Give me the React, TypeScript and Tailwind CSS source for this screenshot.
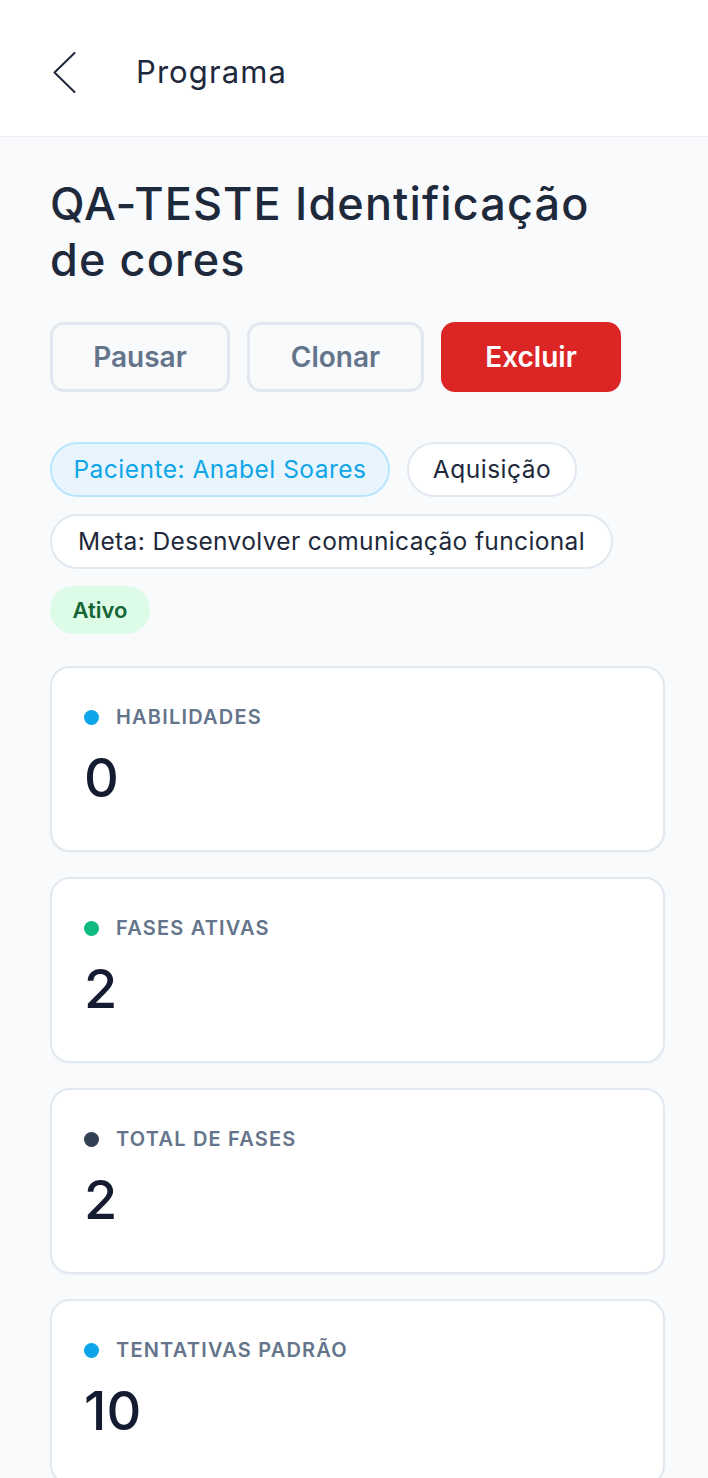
import React from "react";

const F = { fontFamily: "Inter, 'Noto Sans', sans-serif" };

function Card({ dot, label, value }: { dot: string; label: string; value: string }) {
  return (
    <div className="h-[186px] rounded-[20px] border-2 border-[#e2e8f0] bg-white pl-[32px] pt-[35px] shadow-[0_1px_2px_rgba(15,23,42,0.04)]">
      <div className="flex h-[28px] items-center gap-[17px]">
        <span className={`h-[15px] w-[15px] rounded-full ${dot}`} />
        <span className="text-[20px] font-semibold uppercase leading-[28px] tracking-[0.06em] text-[#64748b]">{label}</span>
      </div>
      <div className="mt-[17px] text-[54px] font-medium leading-[60px] text-[#151b30]">{value}</div>
    </div>
  );
}

export default function App() {
  return (
    <div style={F} className="min-h-[1478px] w-[708px] bg-[#f8fafc]">
      <header className="flex h-[137px] items-center border-b border-[#eef0f4] bg-white pl-[53px] pt-[8px]">
        <svg width="23" height="41" viewBox="0 0 23 41" fill="none" className="shrink-0">
          <polyline points="21.5,1 1.5,20.5 21.5,40" stroke="#1e293b" strokeWidth="2" strokeLinecap="round" strokeLinejoin="round" />
        </svg>
        <span className="ml-[60px] text-[31px] leading-[40px] tracking-[0.035em] text-[#1e293b]">Programa</span>
      </header>

      <main className="pl-[50px] pr-[43px] pt-[39px]">
        <h1 className="max-w-[580px] text-[45px] font-medium leading-[56px] tracking-[0.025em] text-[#1e293b]">
          QA-TESTE Identificação de cores
        </h1>

        <div className="mt-[34px] flex gap-[17px]">
          <button className="h-[70px] w-[180px] rounded-[14px] border-[3px] border-[#e2e8f0] bg-[#f8fafc] text-[28px] font-semibold text-[#64748b]">
            Pausar
          </button>
          <button className="h-[70px] w-[177px] rounded-[14px] border-[3px] border-[#e2e8f0] bg-[#f8fafc] text-[28px] font-semibold text-[#64748b]">
            Clonar
          </button>
          <button className="h-[70px] w-[180px] rounded-[14px] bg-[#dc2626] text-[28px] font-semibold text-white">
            Excluir
          </button>
        </div>

        <div className="mt-[50px] flex w-[600px] flex-wrap gap-[17px]">
          <span className="flex h-[55px] w-[340px] items-center justify-center rounded-full border-2 border-[#bae6fd] bg-[#e9f5fc] text-[24.5px] tracking-[0.02em] text-[#0ea5e9]">
            Paciente: Anabel Soares
          </span>
          <span className="flex h-[55px] w-[170px] items-center justify-center rounded-full border-2 border-[#e2e8f0] bg-white text-[24.5px] tracking-[0.02em] text-[#1e293b]">
            Aquisição
          </span>
          <span className="flex h-[55px] w-[563px] items-center justify-center rounded-full border-2 border-[#e2e8f0] bg-white text-[24.5px] tracking-[0.015em] text-[#1e293b]">
            Meta: Desenvolver comunicação funcional
          </span>
          <span className="flex h-[48px] w-[100px] items-center justify-center rounded-full bg-[#dcfce7] text-[22px] font-semibold text-[#166534]">
            Ativo
          </span>
        </div>

        <div className="mt-[32px] flex flex-col gap-[25px] pb-[40px]">
          <Card dot="bg-[#0ea5e9]" label="Habilidades" value="0" />
          <Card dot="bg-[#10b981]" label="Fases ativas" value="2" />
          <Card dot="bg-[#334155]" label="Total de fases" value="2" />
          <Card dot="bg-[#0ea5e9]" label="Tentativas padrão" value="10" />
        </div>
      </main>
    </div>
  );
}
